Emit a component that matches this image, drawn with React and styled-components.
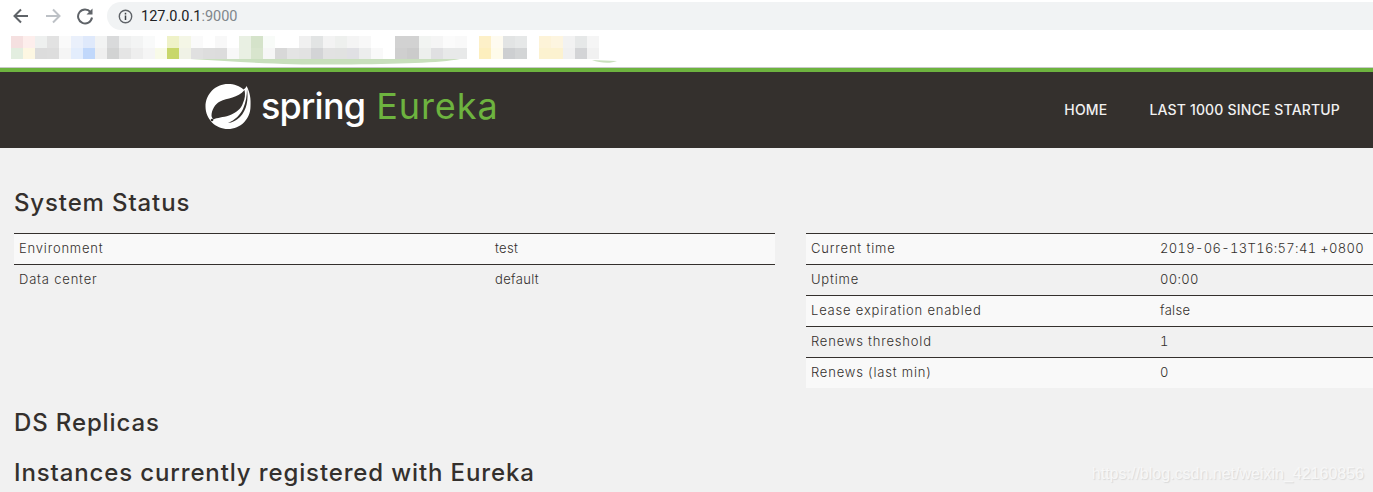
import React from "react";
import styled, { createGlobalStyle } from "styled-components";

const CELL = 12;
const TOP = [
  "#f5e0e0", "#fdeeec", "#eef0ef", "#e2e2e2", "#fafafa", "#eaf0fb", "#dfe9fb", "#f2f3f3", "#d9dadb", "#eff0f0", "#f3f4f4", "#f9fafa", "#ffffff",
  "#eff2c8", "#f4f6e6", "#fafafa", "#ffffff", "#f8f8f8", "#ffffff", "#e9f0e3", "#d5e3ca", "#f8fbf8", "#ffffff", "#ffffff", "#f0f0f0", "#e2e4e4",
  "#f3f3f3", "#eef0ee", "#f4f4f4", "#f8f8f8", "#ffffff", "#ffffff", "#d2d2d2", "#d2d2d2", "#f2f4f2", "#f5f5f5", "#fbfbfb", "#f9f9f9",
  "#ffffff", "#fdf0c8", "#fefbf0", "#e2e4e4", "#e6e8e8", "#ffffff", "#fdf3d8", "#fdf5e0", "#f2f2f2", "#e6e8e8", "#f5f5f5",
];
const BOTTOM = [
  "#e3eee0", "#fdf7e2", "#dcdcdc", "#dddddd", "#f5f5f5", "#e3edfc", "#c1d8fb", "#efefef", "#d2d3d3", "#e5e5e5", "#eeeeee", "#f5f5f5", "#f8fae8",
  "#c8d76b", "#f0f2e6", "#e0e0e0", "#dddddd", "#dcdcdc", "#f8f8f8", "#e9f0e3", "#d8e5cd", "#f6f6f6", "#d8d8d8", "#e4e4e4", "#e2e2e2", "#d3d4d6",
  "#e2e2e2", "#e1e2e1", "#e0e0e4", "#eceded", "#f9f9f9", "#ffffff", "#cfcfcf", "#cbcbcb", "#edefed", "#e0e0e2", "#e8e9e9", "#e8e9e9",
  "#ffffff", "#fdefbe", "#fefbea", "#cdcfd1", "#d3d5d6", "#ffffff", "#fcf2d0", "#fcf2d0", "#f0f0f0", "#d3d4d6", "#f1f1f1",
];

const SYSTEM_LEFT = [
  ["Environment", "test"],
  ["Data center", "default"],
];

const SYSTEM_RIGHT = [
  ["Current time", "2019-06-13T16:57:41 +0800"],
  ["Uptime", "00:00"],
  ["Lease expiration enabled", "false"],
  ["Renews threshold", "1"],
  ["Renews (last min)", "0"],
];

const GlobalStyle = createGlobalStyle`
  html, body {
    margin: 0;
    padding: 0;
    background: #f1f1f1;
    overflow: hidden;
  }
`;

const Page = styled.div`
  position: relative;
  width: 1373px;
  height: 492px;
  overflow: hidden;
  background: #f1f1f1;
  font-family: "Inter", "Noto Sans", sans-serif;
  color: #34302d;
`;

const BrowserBar = styled.div`
  height: 30px;
  background: #fff;
  display: flex;
  align-items: flex-start;
  padding-left: 12px;
  box-sizing: border-box;
`;

const NavIcons = styled.div`
  display: flex;
  gap: 14px;
  margin-top: 7px;
  width: 95px;
  svg {
    display: block;
  }
`;

const AddressBar = styled.div`
  flex: 1;
  height: 28px;
  margin-top: 2px;
  background: #f1f3f4;
  border-radius: 14px 0 0 14px;
  display: flex;
  align-items: center;
  gap: 8px;
  padding-left: 11px;
  font-family: "Roboto", "Liberation Sans", sans-serif;
  font-size: 14.5px;
  color: #202124;
`;

const Port = styled.span`
  color: #80868b;
`;

const Url = styled.span``;

const Bookmarks = styled.div`
  height: 37px;
  background: #fff;
  border-bottom: 1px solid #c9c9c9;
  svg {
    display: block;
  }
`;

const Navbar = styled.header`
  height: 76px;
  background: #34302d;
  border-top: 4px solid #6db33f;
  display: flex;
  align-items: center;
  justify-content: space-between;
  padding: 0 33px 0 205px;
`;

const Brand = styled.div`
  display: flex;
  align-items: center;
  gap: 10px;
  font-size: 36px;
  margin-top: -8px;
`;

const BrandName = styled.span`
  color: ${(p) => (p.$green ? "#6db33f" : "#fff")};
  font-weight: ${(p) => (p.$green ? 400 : 500)};
  letter-spacing: ${(p) => (p.$green ? "0.9px" : "-0.8px")};
  margin-left: ${(p) => (p.$green ? "1px" : "-1px")};
`;

const Menu = styled.nav`
  display: flex;
  gap: 42px;
  margin-top: -1px;
`;

const MenuItem = styled.a`
  color: #f1f1f1;
  font-size: 14px;
  font-weight: 500;
  letter-spacing: 0.17px;
  text-transform: uppercase;
`;

const Content = styled.main`
  padding: 38px 0 0 14px;
`;

const Heading = styled.h2`
  margin: ${(p) => (p.$spaced ? "16px" : "0")} 0 0;
  height: 34px;
  line-height: 34px;
  font-size: 24px;
  font-weight: 500;
  letter-spacing: 0.87px;
  color: #34302d;
`;

const Columns = styled.div`
  display: grid;
  grid-template-columns: 761px 567px;
  column-gap: 31px;
  margin: 13px 0 18px;
  min-height: 155px;
  align-items: start;
`;

const Table = styled.div`
  font-size: 13px;
  font-weight: 300;
`;

const Row = styled.div`
  display: grid;
  grid-template-columns: ${(p) => p.$label}px 1fr;
  height: 31px;
  box-sizing: border-box;
  border-top: 1px solid #34302d;
  align-items: center;
  padding: 0 0 2px 5px;
  background: ${(p) => (p.$odd ? "#f9f9f9" : "#f1f1f1")};
  color: #34302d;
`;

const Label = styled.span`
  white-space: nowrap;
  letter-spacing: 0.8px;
`;

const Value = styled.span`
  white-space: nowrap;
  letter-spacing: 0.35px;
  font-variant-numeric: tabular-nums;
`;

const Watermark = styled.div`
  position: absolute;
  right: 9px;
  bottom: 9px;
  font-family: "Liberation Sans", sans-serif;
  font-size: 16px;
  color: #f7f7f7;
  text-shadow: 1px 1px 1px #d9d9d9;
`;

const Back = () => (
  <svg width="18" height="18" viewBox="0 0 18 18" fill="none" stroke="#5f6368" strokeWidth="2">
    <path d="M16 9H3M9 2.5 2.5 9 9 15.5" />
  </svg>
);

const Forward = () => (
  <svg width="18" height="18" viewBox="0 0 18 18" fill="none" stroke="#bdc1c6" strokeWidth="2">
    <path d="M2 9h13M9 2.5 15.5 9 9 15.5" />
  </svg>
);

const Reload = () => (
  <svg width="18" height="18" viewBox="0 0 18 18" fill="none">
    <path d="M14.5 5A7 7 0 1 0 16 10.5" stroke="#5f6368" strokeWidth="2" />
    <path d="M16.5 1.5v6h-6z" fill="#5f6368" />
  </svg>
);

const Info = () => (
  <svg width="15" height="15" viewBox="0 0 15 15" fill="none">
    <circle cx="7.5" cy="7.5" r="6.2" stroke="#5f6368" strokeWidth="1.4" />
    <path d="M7.5 6.6v4.4M7.5 3.8v1.6" stroke="#3c4043" strokeWidth="1.5" />
  </svg>
);

const Mosaic = () => (
  <svg width="640" height="37" viewBox="0 0 640 37">
    <path d="M190 29 L460 29 C440 33 400 34 340 34.5 C300 35 250 33 190 29Z" fill="#c9dfbd" />
    <path d="M592 30 L617 31 C610 34 600 33 592 30Z" fill="#c9dfbd" />
    {TOP.map((c, i) => (
      <rect key={i} x={11 + i * CELL} y={6} width={CELL} height={12} fill={c} />
    ))}
    {BOTTOM.map((c, i) => (
      <rect key={i} x={11 + i * CELL} y={18} width={CELL} height={11} fill={c} />
    ))}
  </svg>
);

const Leaf = () => (
  <svg width="47" height="47" viewBox="0 0 47 47">
    <path
      d="M23 1C29 1 35 3 38.5 6.5C40 5.5 41 4.5 41.5 3C45 9 46 16 45.5 23.5C45.5 36 35.5 46 23 46C10.5 46 0.5 36 0.5 23.5C0.5 11 10.5 1 23 1Z"
      fill="#fff"
    />
    <path
      d="M6.5 33C6.5 27 10 21 15 18.5C22 15 33 15 39.5 7C40.5 11 40 16 38 20C36 26 31 30 24 32.5C18 34.5 12 34.5 8.5 36.5C7.5 35.5 6.8 34.5 6.5 33Z"
      fill="#34302d"
    />
    <path d="M42 6C43.5 16 42 27 35 34C31 38 27 39.5 23 40C30 37 35 32 38 26C41 19 42 12 42 6Z" fill="#34302d" />
    <circle cx="7" cy="37" r="1.3" fill="#34302d" />
  </svg>
);

const DataTable = ({ rows, label }) => (
  <Table>
    {rows.map(([name, value], i) => (
      <Row key={name} $label={label} $odd={i % 2 === 0}>
        <Label>{name}</Label>
        <Value>{value}</Value>
      </Row>
    ))}
  </Table>
);

const App = () => {
  return (
    <Page>
      <GlobalStyle />
      <BrowserBar>
        <NavIcons>
          <Back />
          <Forward />
          <Reload />
        </NavIcons>
        <AddressBar>
          <Info />
          <Url>
            127.0.0.1<Port>:9000</Port>
          </Url>
        </AddressBar>
      </BrowserBar>
      <Bookmarks>
        <Mosaic />
      </Bookmarks>
      <Navbar>
        <Brand>
          <Leaf />
          <BrandName>spring</BrandName>
          <BrandName $green>Eureka</BrandName>
        </Brand>
        <Menu>
          <MenuItem>Home</MenuItem>
          <MenuItem>Last 1000 since startup</MenuItem>
        </Menu>
      </Navbar>
      <Content>
        <Heading>System Status</Heading>
        <Columns>
          <DataTable rows={SYSTEM_LEFT} label={476} />
          <DataTable rows={SYSTEM_RIGHT} label={349} />
        </Columns>
        <Heading>DS Replicas</Heading>
        <Heading $spaced>Instances currently registered with Eureka</Heading>
      </Content>
      <Watermark>https://blog.csdn.net/weixin_42160856</Watermark>
    </Page>
  );
};

export default App;
